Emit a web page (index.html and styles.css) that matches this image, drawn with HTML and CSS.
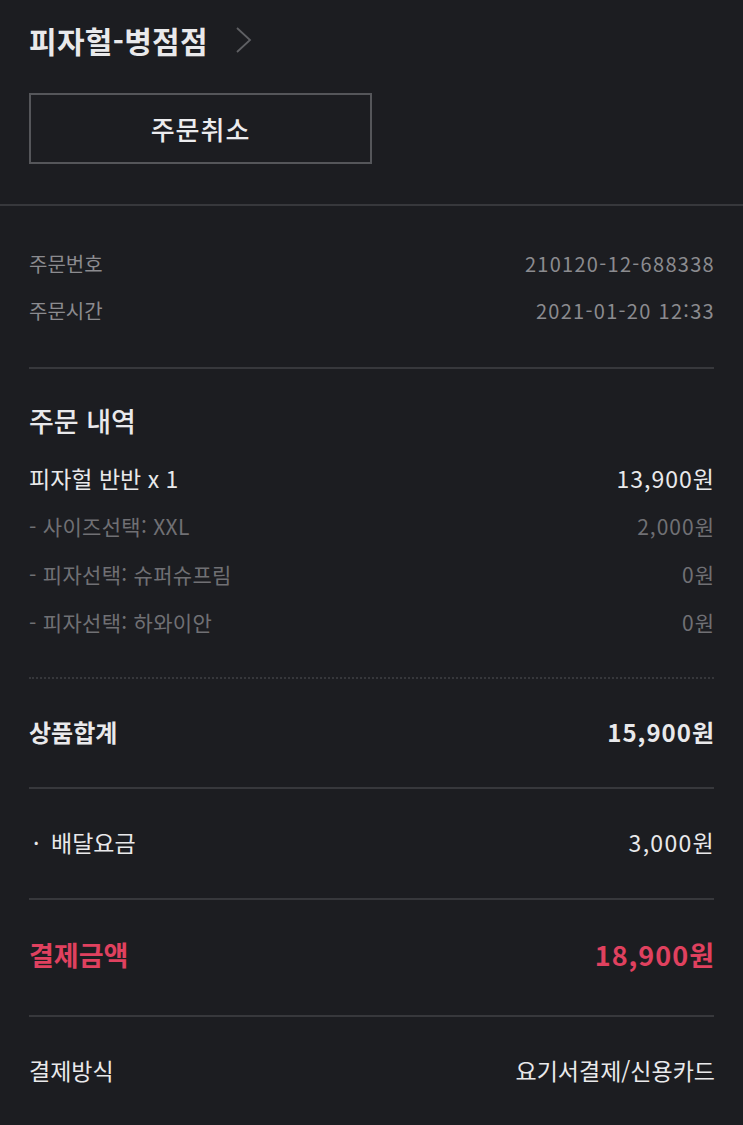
FILE: index.html
```html
<!DOCTYPE html>
<html lang="ko">
<head>
    <meta charset="UTF-8">
    <meta name="viewport" content="width=device-width, initial-scale=1.0">
    <title>주문 상세</title>
    <link rel="stylesheet" href="styles.css">
</head>
<body>
    <!-- Store header -->
    <div class="header">
        <div class="store">
            <span class="store-name">피자헐-병점점</span>
            <svg class="chevron" width="20" height="28" viewBox="0 0 20 28">
                <polyline points="3,2 16,14 3,26" fill="none" stroke="#5f6064" stroke-width="1.8"/>
            </svg>
        </div>
        <button class="cancel-btn">주문취소</button>
    </div>

    <div class="content">
        <!-- Order info -->
        <div class="info">
            <div class="row info-row">
                <span>주문번호</span>
                <span class="num">210120-12-688338</span>
            </div>
            <div class="row info-row">
                <span>주문시간</span>
                <span class="num">2021-01-20 12:33</span>
            </div>
        </div>

        <!-- Order items -->
        <div class="items">
            <h2>주문 내역</h2>
            <div class="row item-row">
                <span>피자헐 반반 x 1</span>
                <span class="num">13,900원</span>
            </div>
            <div class="row option-row">
                <span>- 사이즈선택: XXL</span>
                <span class="num">2,000원</span>
            </div>
            <div class="row option-row">
                <span>- 피자선택: 슈퍼슈프림</span>
                <span class="num">0원</span>
            </div>
            <div class="row option-row">
                <span>- 피자선택: 하와이안</span>
                <span class="num">0원</span>
            </div>
        </div>

        <div class="row sum-row">
            <span>상품합계</span>
            <span class="num">15,900원</span>
        </div>

        <div class="row fee-row">
            <span><span class="dot">·</span>배달요금</span>
            <span class="num">3,000원</span>
        </div>

        <div class="row total-row">
            <span>결제금액</span>
            <span class="num">18,900원</span>
        </div>

        <div class="row method-row">
            <span>결제방식</span>
            <span>요기서결제/신용카드</span>
        </div>
    </div>
</body>
</html>
```

FILE: styles.css
```css
body {
    margin: 0;
    background-color: #1c1d21;
    color: #e9e9eb;
    font-family: "Noto Sans CJK KR", "Noto Sans", sans-serif;
}
.header {
    padding: 20px 29px 40px;
    border-bottom: 2px solid #37383c;
}
.store {
    display: flex;
    align-items: center;
    height: 40px;
}
.store-name {
    font-size: 30px;
    font-weight: 700;
    letter-spacing: 0.3px;
}
.chevron {
    margin-left: 26px;
}
.cancel-btn {
    display: block;
    margin-top: 33px;
    width: 343px;
    height: 71px;
    background: transparent;
    border: 2px solid #55565a;
    color: #ececee;
    font-family: inherit;
    font-size: 26px;
    font-weight: 500;
    letter-spacing: 1px;
}
.content {
    padding: 0 29px;
}
.row {
    display: flex;
    justify-content: space-between;
    align-items: center;
    box-sizing: border-box;
}
.row > span:last-child {
    margin-right: -1px;
}
.num {
    letter-spacing: 1px;
}
.info {
    padding: 34px 0 33px;
    border-bottom: 2px solid #37383c;
}
.info-row {
    height: 47px;
    font-size: 20px;
    color: #8b8b8f;
}
.info-row .num {
    letter-spacing: 1.3px;
}
.items {
    padding: 32px 0 31px;
    border-bottom: 2px dotted #36373b;
}
.items h2 {
    margin: 0 0 13px;
    height: 40px;
    line-height: 40px;
    font-size: 27px;
    font-weight: 500;
}
.item-row {
    height: 48px;
    font-size: 23px;
}
.option-row {
    height: 48px;
    font-size: 21px;
    color: #707074;
}
.option-row span:first-child {
    letter-spacing: 0.3px;
}
.sum-row {
    height: 110px;
    padding-bottom: 3px;
    font-size: 24px;
    font-weight: 700;
    border-bottom: 2px solid #37383c;
}
.fee-row {
    height: 111px;
    padding-bottom: 3px;
    font-size: 23px;
    border-bottom: 2px solid #37383c;
}
.fee-row .num {
    letter-spacing: 1.3px;
}
.dot {
    display: inline-block;
    width: 18px;
    padding-left: 4px;
}
.total-row {
    height: 117px;
    padding-bottom: 6px;
    font-size: 27px;
    font-weight: 700;
    color: #e0415f;
    border-bottom: 2px solid #37383c;
}
.method-row {
    height: 108px;
    padding-bottom: 3px;
    font-size: 23px;
}
```
